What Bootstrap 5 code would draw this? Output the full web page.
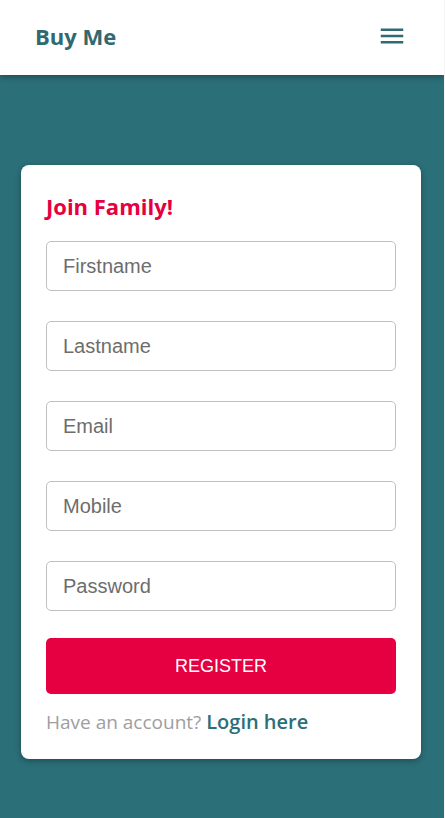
<!DOCTYPE html>
<html lang="en">
<head>
<meta charset="utf-8">
<meta name="viewport" content="width=device-width, initial-scale=1">
<title>Buy Me</title>
<link href="https://cdn.jsdelivr.net/npm/bootstrap@5.3.0/dist/css/bootstrap.min.css" rel="stylesheet">
<style>
  :root { --teal: #2b6f79; --crimson: #e60041; }
  body { background: var(--teal); border-right: 1px solid #f4f4f4; font-family: "Segoe UI", "Open Sans", "Noto Sans", sans-serif; }
  .site-bar { height: 75px; padding: 0 34px 4px 35px; box-shadow: 0 2px 6px rgba(0, 0, 0, .3); }
  .site-bar .navbar-brand, .join-title { font-size: 22px; }
  .site-bar .navbar-brand { color: #32686f; line-height: 30px; }
  .menu-button { color: #32686f; width: 36px; height: 36px; }
  .page-area { padding: 90px 23px 40px 21px; }
  .join-card { max-width: 400px; padding: 24px 25px 22px; border-radius: 8px; box-shadow: 0 2px 6px rgba(0, 0, 0, .3); }
  .join-title { color: var(--crimson); line-height: 34px; margin-bottom: 18px; }
  .field-stack { gap: 30px; margin-bottom: 27px; }
  .field-stack .form-floating > .form-control { height: 50px; min-height: 50px; padding: 0 16px; border-color: #c0c0c0; border-radius: 5px; font: 20px "Liberation Sans", Arial, sans-serif; }
  .field-stack .form-floating > label { padding: 0 16px; color: #6d6d6d; font: 20px/48px "Liberation Sans", Arial, sans-serif; }
  .field-stack .form-floating > .form-control:focus ~ label,
  .field-stack .form-floating > .form-control:not(:placeholder-shown) ~ label { height: 20px; padding: 0 4px; margin-left: 12px; background: #fff; font-size: 14px; line-height: 20px; transform: translateY(-10px); opacity: 1; }
  .register-button, .register-button:hover { background: var(--crimson); color: #fff; }
  .register-button { height: 56px; border: 0; border-radius: 5px; font: 18px "Liberation Sans", Arial, sans-serif; }
  .login-line { color: #9e9e9e; font-size: 19px; line-height: 30px; margin-top: 13px; }
  .login-line a { color: var(--teal); font-size: 20px; }
</style>
</head>
<body class="min-vh-100">
<header>
  <nav class="navbar site-bar bg-white flex-nowrap justify-content-between" aria-label="Main">
    <a class="navbar-brand fw-bold m-0 p-0" href="#">Buy Me</a>
    <button class="menu-button btn border-0 p-0 d-flex align-items-center justify-content-center" type="button" aria-label="Open menu">
      <svg width="30" height="30" viewBox="0 0 24 24" fill="currentColor" aria-hidden="true"><path d="M3 18h18v-2H3v2zm0-5h18v-2H3v2zm0-7v2h18V6H3z"/></svg>
    </button>
  </nav>
</header>
<main class="page-area">
  <form class="join-card bg-white mx-auto">
    <h1 class="join-title fw-bold">Join Family!</h1>
    <div class="field-stack d-flex flex-column">
      <div class="form-floating"><input class="form-control" id="firstname" type="text" placeholder=" "><label for="firstname">Firstname</label></div>
      <div class="form-floating"><input class="form-control" id="lastname" type="text" placeholder=" "><label for="lastname">Lastname</label></div>
      <div class="form-floating"><input class="form-control" id="email" type="email" placeholder=" "><label for="email">Email</label></div>
      <div class="form-floating"><input class="form-control" id="mobile" type="tel" placeholder=" "><label for="mobile">Mobile</label></div>
      <div class="form-floating"><input class="form-control" id="password" type="password" placeholder=" "><label for="password">Password</label></div>
    </div>
    <button class="register-button btn w-100" type="submit">REGISTER</button>
    <p class="login-line mb-0">Have an account? <a class="fw-semibold text-decoration-none" href="#">Login here</a></p>
  </form>
</main>
<script src="https://cdn.jsdelivr.net/npm/bootstrap@5.3.0/dist/js/bootstrap.bundle.min.js"></script>
</body>
</html>
